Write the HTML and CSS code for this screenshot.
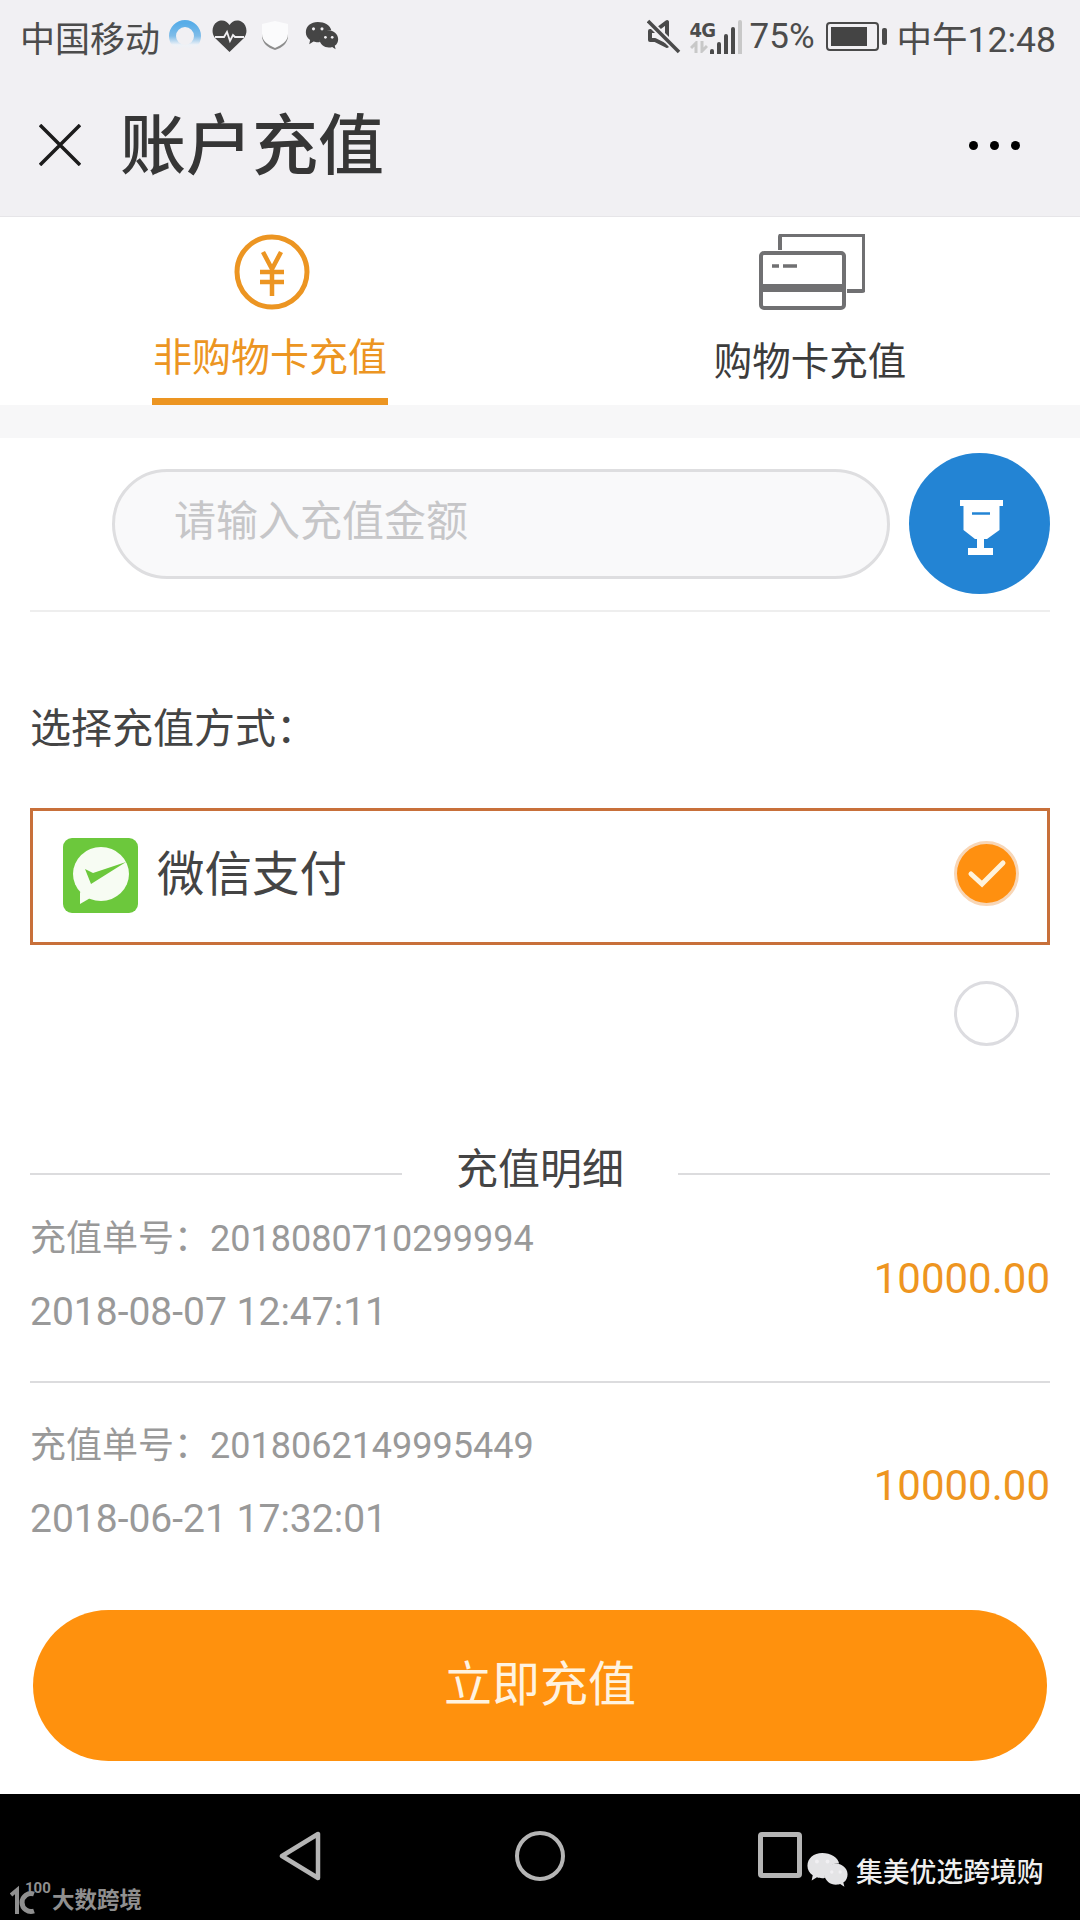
FILE: index.html
```html
<!DOCTYPE html>
<html lang="en">

<head>
    <meta charset="UTF-8">
    <meta name="viewport" content="width=device-width, initial-scale=1.0">
    <title>账户充值</title>
    <link rel="stylesheet" href="styles.css">
</head>

<body>

    <svg class="defs" width="0" height="0">
        <defs>
            <symbol id="wechat" viewBox="0 0 40 36">
                <path d="M15 1C7 1 1 6 1 13c0 4 2 7 5 9l-1 5 5-3c2 .6 3 .8 5 .8 1 0 2 0 2.500-.2C17 16 24 10 31 11 30 5 23 1 15 1z" fill="currentColor" />
                <path d="M39 21c0-6-6-10-11-10s-11 4-11 10 6 10 11 10c1.500 0 3-.2 4-.6l4 2.600-1-4c3-2 4-5 4-8z" fill="currentColor" />
                <circle cx="10" cy="9" r="1.800" class="eye" />
                <circle cx="20" cy="9" r="1.800" class="eye" />
                <circle cx="24" cy="19" r="1.600" class="eye" />
                <circle cx="32" cy="19" r="1.600" class="eye" />
            </symbol>
        </defs>
    </svg>

    <div class="status-bar">
        <div class="status-left">
            <span class="carrier">中国移动</span>
            <svg class="ring" width="34" height="34" viewBox="0 0 34 34">
                <defs>
                    <linearGradient id="ringFade" x1="0" y1="0" x2="0" y2="1">
                        <stop offset="0" stop-color="#58ade8" />
                        <stop offset="0.5" stop-color="#7fbce8" />
                        <stop offset="0.85" stop-color="#eef2f7" />
                        <stop offset="1" stop-color="#f1f0f3" />
                    </linearGradient>
                </defs>
                <circle cx="17" cy="17" r="12.500" fill="none" stroke="url(#ringFade)" stroke-width="7" />
            </svg>
            <svg class="heart" width="35" height="32" viewBox="0 0 35 32">
                <path d="M17.500 32L3 18C-1 13 0 5 5 2c5-3 10-1 12.500 3C20 1 25-1 30 2c5 3 6 11 2 16z" fill="#454545" />
                <path d="M3 17h9l3-5 3 9 3-6 2 2h9" fill="none" stroke="#f1f0f3" stroke-width="1.800" />
            </svg>
            <svg class="shield" width="28" height="30" viewBox="0 0 28 30">
                <path d="M1 4l13-3 13 3v11c0 7-6 12-13 14C7 27 1 22 1 15z" fill="#8d8d8d" />
                <path d="M1 3l13-3 13 3v10c0 7-6 11-13 14C7 24 1 20 1 13z" fill="#fbfbfc" />
            </svg>
            <svg class="icon-wechat dark" width="34" height="31">
                <use href="#wechat" />
            </svg>
        </div>
        <div class="status-right">
            <svg class="mute" width="34" height="35" viewBox="0 0 34 35">
                <path d="M3 12h5l12-9v24L8 21H3z" fill="none" stroke="#4a4a4a" stroke-width="4" stroke-linejoin="round" />
                <path d="M1 2l31 31" stroke="#f1f0f3" stroke-width="7" />
                <path d="M1 2l31 31" stroke="#4a4a4a" stroke-width="3.500" />
            </svg>
            <div class="network">
                <span class="net-type">4G</span>
                <svg width="18" height="12" viewBox="0 0 18 12">
                    <path d="M6 12V2L1 7M12 0v10l5-5" fill="none" stroke="#c8c8c8" stroke-width="3" />
                </svg>
            </div>
            <div class="signal">
                <i class="bar bar-1"></i>
                <i class="bar bar-2"></i>
                <i class="bar bar-3"></i>
                <i class="bar bar-4"></i>
                <i class="bar bar-5"></i>
            </div>
            <span class="percent">75%</span>
            <div class="battery">
                <div class="battery-body"><div class="battery-level"></div></div>
                <div class="battery-nub"></div>
            </div>
            <span class="clock">中午12:48</span>
        </div>
    </div>

    <div class="header">
        <svg class="close" width="42" height="42" viewBox="0 0 42 42">
            <path d="M1 1l40 40M41 1L1 41" stroke="#1c1c1c" stroke-width="3.500" />
        </svg>
        <h1>账户充值</h1>
        <div class="more"><i></i><i></i><i></i></div>
    </div>

    <div class="tabs">
        <div class="tab active">
            <svg width="76" height="76" viewBox="0 0 76 76">
                <circle cx="38" cy="38" r="35" fill="none" stroke="#ec9522" stroke-width="5" />
                <path d="M29 18l9 17 9-17M26 38h24M26 48h24M38 35v27" fill="none" stroke="#ec9522" stroke-width="4.500" />
            </svg>
            <span>非购物卡充值</span>
        </div>
        <div class="tab">
            <svg class="cards" width="106" height="76" viewBox="0 0 106 76">
                <path d="M21 16V3a2 2 0 0 1 2-2h80a2 2 0 0 1 2 2v52a2 2 0 0 1-2 2H88" fill="none" stroke="#707072" stroke-width="4" />
                <rect x="2" y="19" width="83" height="55" rx="3" fill="none" stroke="#707072" stroke-width="4" />
                <path d="M2 54h83" stroke="#707072" stroke-width="8" />
                <path d="M13 32h7M24 32h14" stroke="#707072" stroke-width="3.500" />
            </svg>
            <span>购物卡充值</span>
        </div>
    </div>
    <div class="band"></div>

    <div class="content">
        <div class="amount-row">
            <div class="amount-input">请输入充值金额</div>
            <div class="amount-btn">
                <svg width="44" height="55" viewBox="0 0 44 55">
                    <path d="M0 0h43v6h-3.500v24L27 39h-3v9h9v7H8v-7h9v-9h-2L3.500 30V6H0z" fill="#fff" />
                    <path d="M12 13.500h18" stroke="#2384d4" stroke-width="2.500" />
                </svg>
            </div>
        </div>

        <div class="pay-label">选择充值方式：</div>

        <div class="pay-option selected">
            <svg class="pay-logo" width="75" height="75" viewBox="0 0 75 75">
                <rect width="75" height="75" rx="9" fill="#6cc83c" />
                <ellipse cx="38" cy="36" rx="28" ry="27" fill="#f7fcf3" />
                <path d="M17 54v12l12-7z" fill="#f7fcf3" />
                <path d="M22 31l8 4 33-11-35 22z" fill="#6cc83c" />
            </svg>
            <span class="pay-name">微信支付</span>
            <div class="radio checked">
                <svg width="40" height="30" viewBox="0 0 40 30">
                    <path d="M4 15l11 10L36 4" fill="none" stroke="#fff3dc" stroke-width="5" stroke-linecap="round" />
                </svg>
            </div>
        </div>
        <div class="pay-option">
            <div class="radio"></div>
        </div>

        <div class="detail-title"><span>充值明细</span></div>

        <div class="record">
            <div class="record-info">
                <div class="record-no">充值单号：2018080710299994</div>
                <div class="record-time">2018-08-07 12:47:11</div>
            </div>
            <div class="record-amount">10000.00</div>
        </div>
        <div class="record last">
            <div class="record-info">
                <div class="record-no">充值单号：2018062149995449</div>
                <div class="record-time">2018-06-21 17:32:01</div>
            </div>
            <div class="record-amount">10000.00</div>
        </div>

        <button class="submit-btn" type="button"><span>立即充值</span></button>
    </div>

    <div class="nav-bar">
        <svg class="nav-back" width="42" height="50" viewBox="0 0 42 50">
            <path d="M3 25L39 3v44z" fill="none" stroke="#b5b5b5" stroke-width="4.500" stroke-linejoin="round" />
        </svg>
        <div class="nav-home"></div>
        <div class="nav-recent"></div>

        <div class="mark-left">
            <svg width="42" height="36" viewBox="0 0 42 36">
                <path d="M1 15l6-5v24" fill="none" stroke="#8f8f8f" stroke-width="4" />
                <path d="M24 14a9 9 0 1 0 0 17" fill="none" stroke="#8f8f8f" stroke-width="5" />
                <text x="15" y="13" class="mark-num">100</text>
            </svg>
            <span>大数跨境</span>
        </div>
        <div class="mark-right">
            <svg class="icon-wechat light" width="43" height="38">
                <use href="#wechat" />
            </svg>
            <span>集美优选跨境购</span>
        </div>
    </div>

</body>

</html>
```

FILE: styles.css
```css
* {
    box-sizing: border-box;
}

html,
body {
    margin: 0;
    height: 1920px;
}

body {
    width: 1080px;
    display: flex;
    flex-direction: column;
    overflow: hidden;
    background-color: #ffffff;
    font-family: Roboto, 'Noto Sans CJK SC', sans-serif;
    color: #444;
}

.defs {
    position: absolute;
}

.eye {
    fill: #f1f0f3;
}

.icon-wechat.dark {
    color: #454545;
}

.icon-wechat.light {
    color: #e4e4e6;
}

.icon-wechat.light .eye {
    fill: #000;
}

/* status bar */
.status-bar {
    height: 72px;
    padding: 0 24px 0 20px;
    display: flex;
    justify-content: space-between;
    align-items: center;
    background-color: #f1f0f3;
    color: #4c4c4c;
    font-size: 35px;
}

.status-left,
.status-right {
    display: flex;
    align-items: center;
}

.carrier {
    width: 148px;
    white-space: nowrap;
}

.heart {
    margin-left: 10px;
}

.shield {
    margin-left: 14px;
}

.status-left .icon-wechat {
    margin-left: 16px;
}

.network {
    width: 20px;
    margin-left: 9px;
    display: flex;
    flex-direction: column;
    line-height: 1;
}

.net-type {
    height: 21px;
    font-family: 'DejaVu Sans Condensed', 'DejaVu Sans', sans-serif;
    font-size: 20px;
    font-weight: 700;
    letter-spacing: -1px;
}

.signal {
    height: 35px;
    display: flex;
    align-items: flex-end;
    gap: 3px;
}

.bar {
    display: block;
    width: 4px;
    background-color: #4a4a4a;
    border-radius: 2px 2px 0 0;
}

.bar-1 { height: 5px; }
.bar-2 { height: 12px; }
.bar-3 { height: 20px; }
.bar-4 { height: 27px; }
.bar-5 { height: 34px; background-color: #c8c8c8; }

.percent {
    margin-left: 8px;
    line-height: 1;
}

.battery {
    margin-left: 11px;
    display: flex;
    align-items: center;
    gap: 3px;
}

.battery-body {
    width: 53px;
    height: 29px;
    padding: 3px;
    border: 2px solid #4a4a4a;
    border-radius: 4px;
}

.battery-level {
    width: 36px;
    height: 100%;
    background-color: #444;
}

.battery-nub {
    width: 5px;
    height: 17px;
    background-color: #4a4a4a;
    border-radius: 2px;
}

.clock {
    margin-left: 10px;
    font-size: 35.500px;
    white-space: nowrap;
}

/* header */
.header {
    height: 145px;
    padding: 0 60px 0 38px;
    display: flex;
    align-items: center;
    background-color: #f1f0f3;
    border-bottom: 1px solid #e6e5e8;
}

.close {
    margin-left: 1px;
    margin-top: 2px;
}

.header h1 {
    margin: 6px 0 0 39px;
    font-size: 66px;
    font-weight: 500;
    line-height: 1;
    color: #363636;
}

.more {
    margin-left: auto;
    margin-top: 2px;
    display: flex;
    gap: 12px;
}

.more i {
    width: 9px;
    height: 9px;
    border-radius: 50%;
    background-color: #000;
}

/* tabs */
.tabs {
    height: 188px;
    display: grid;
    grid-template-columns: 540px 540px;
}

.tab {
    padding-top: 17px;
    display: flex;
    flex-direction: column;
    align-items: center;
}

.tab span {
    margin-top: 24px;
    font-size: 38.500px;
    line-height: 56px;
    color: #3c3c3c;
    white-space: nowrap;
}

.tab .cards {
    margin-left: 4px;
}

.tab.active svg {
    margin-left: 4px;
}

.tab.active span {
    margin-top: 20px;
    height: 75px;
    padding: 0 1px;
    font-size: 39px;
    color: #ec9522;
    border-bottom: 7px solid #ec9522;
}

.band {
    height: 33px;
    background-color: #f7f7f8;
}

/* main content */
.content {
    padding: 15px 30px 0;
}

.amount-row {
    padding: 0 0 16px 82px;
    display: flex;
    align-items: center;
    border-bottom: 2px solid #eeeeee;
}

.amount-input {
    width: 778px;
    height: 110px;
    padding-left: 59px;
    border: 3px solid #dedee0;
    border-radius: 55px;
    background-color: #f9f9fa;
    font-size: 42px;
    line-height: 100px;
    color: #c6c6c8;
}

.amount-btn {
    width: 141px;
    height: 141px;
    margin-left: 19px;
    display: flex;
    align-items: center;
    justify-content: center;
    border-radius: 50%;
    background-color: #2384d4;
}

.amount-btn svg {
    margin: 8px 0 0 4px;
}

.pay-label {
    margin-top: 87px;
    font-size: 41px;
    line-height: 60px;
}

.pay-option {
    height: 137px;
    padding: 0 31px 0 33px;
    display: flex;
    align-items: center;
}

.pay-option.selected {
    margin-top: 49px;
    border: 3px solid #c8703a;
    padding: 0 28px 0 30px;
}

.pay-logo {
    margin-top: -2px;
}

.pay-name {
    margin-left: 19px;
    margin-top: -13px;
    font-size: 47.500px;
    white-space: nowrap;
}

.radio {
    width: 65px;
    height: 65px;
    margin-left: auto;
    display: flex;
    align-items: center;
    justify-content: center;
    border: 3px solid #dcdce0;
    border-radius: 50%;
}

.radio.checked {
    margin-top: -6px;
    border-color: #f8d6b6;
    background-color: #ff9010;
}

.detail-title {
    margin-top: 57px;
    height: 60px;
    display: flex;
    align-items: center;
    font-size: 42px;
}

.detail-title::before,
.detail-title::after {
    content: "";
    flex: 1;
    height: 2px;
    margin-top: 10px;
    background-color: #dcdcde;
}

.detail-title span {
    margin-top: -7px;
    padding: 0 54px;
    white-space: nowrap;
}

.record {
    padding: 10px 0 39px;
    display: flex;
    justify-content: space-between;
    align-items: center;
    border-bottom: 2px solid #dcdcde;
}

.record.last {
    padding-top: 33px;
    padding-bottom: 0;
    border-bottom: none;
}

.record-no {
    font-size: 36px;
    line-height: 60px;
    color: #999;
}

.record-time {
    margin-top: 13px;
    font-size: 39px;
    line-height: 60px;
    color: #999;
}

.record-amount {
    margin-top: 6px;
    font-size: 42px;
    color: #ee9520;
}

.submit-btn {
    width: 1014px;
    height: 151px;
    margin: 61px 0 0 3px;
    padding: 0 0 12px;
    display: block;
    border: none;
    border-radius: 76px;
    background-color: #ff910d;
    color: #fff3e0;
    font-family: inherit;
    font-size: 48px;
}

/* android nav bar */
.nav-bar {
    position: relative;
    height: 126px;
    margin-top: auto;
    padding: 37px 0 0 279px;
    display: flex;
    align-items: flex-start;
    background-color: #000;
}

.nav-home {
    width: 50px;
    height: 50px;
    margin-left: 194px;
    border: 4px solid #b5b5b5;
    border-radius: 50%;
}

.nav-recent {
    width: 44px;
    height: 46px;
    margin: 1px 0 0 193px;
    border: 5px solid #b5b5b5;
    border-radius: 4px;
}

.mark-left {
    position: absolute;
    left: 10px;
    bottom: 4px;
    display: flex;
    align-items: center;
    color: #8f8f8f;
    font-size: 22.500px;
    font-weight: 700;
}

.mark-num {
    font-family: Roboto, sans-serif;
    font-size: 15px;
    fill: #8f8f8f;
}

.mark-right {
    position: absolute;
    left: 806px;
    top: 57px;
    display: flex;
    align-items: center;
    gap: 7px;
    color: #efefef;
    font-size: 26.800px;
    font-weight: 500;
    white-space: nowrap;
}
```
